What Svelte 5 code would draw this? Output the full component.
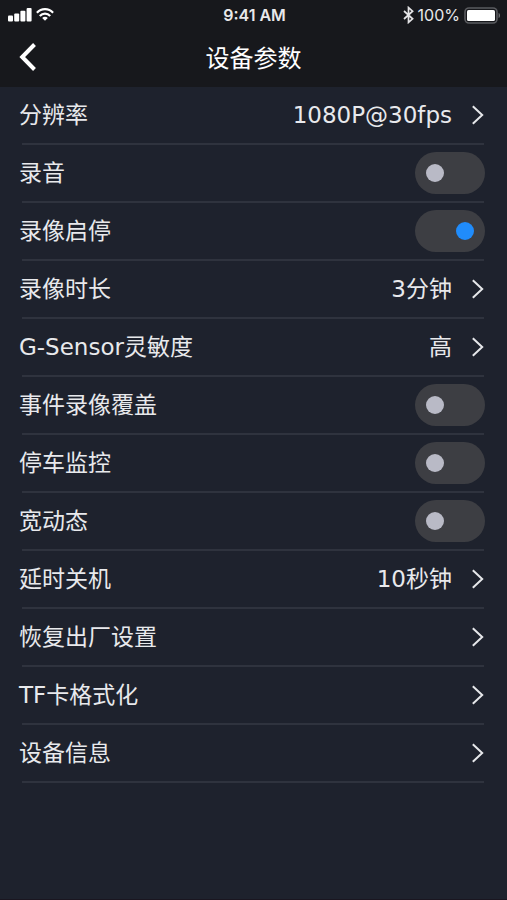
<script>
  let settings = [
    { name: '分辨率', value: '1080P@30fps' },
    { name: '录音', toggle: true, on: false },
    { name: '录像启停', toggle: true, on: true },
    { name: '录像时长', value: '3分钟' },
    { name: 'G-Sensor灵敏度', value: '高' },
    { name: '事件录像覆盖', toggle: true, on: false },
    { name: '停车监控', toggle: true, on: false },
    { name: '宽动态', toggle: true, on: false },
    { name: '延时关机', value: '10秒钟' },
    { name: '恢复出厂设置' },
    { name: 'TF卡格式化' },
    { name: '设备信息' },
  ];
</script>

<div class="screen">
  <header>
    <div class="status">
      <div class="side">
        <svg width="24" height="15" viewBox="0 0 24 15" fill="#fff">
          <rect x="0" y="7.4" width="5" height="6" rx="1" />
          <rect x="6.2" y="5.4" width="5" height="8" rx="1" />
          <rect x="12.4" y="2.8" width="5" height="10.6" rx="1" />
          <rect x="18.6" y="0" width="5" height="13.4" rx="1" />
        </svg>
        <svg width="18" height="14" viewBox="0 0 18 14" fill="none" stroke="#fff" stroke-width="2.2">
          <path d="M0.9 4.8C5.4 0 12.6 0 17.1 4.8" />
          <path d="M3.8 7.9C6.7 4.8 11.3 4.8 14.2 7.9" />
          <path d="M9 12.8L6.2 10C7.8 8.4 10.2 8.4 11.8 10Z" fill="#fff" stroke="none" />
        </svg>
      </div>
      <span class="time">9:41 AM</span>
      <div class="side right">
        <svg width="11" height="18" viewBox="0 0 11 18" fill="none" stroke="#e4e4e6" stroke-width="1.7">
          <path d="M1 5L9.6 12.8L5.5 16.4V1.6L9.6 5.2L1 13" />
        </svg>
        <span class="percent">100%</span>
        <svg width="37" height="17" viewBox="0 0 37 17">
          <rect x="1" y="1" width="32" height="15" rx="4" fill="#17181c" stroke="#5a5b5f" stroke-width="1.6" />
          <rect x="3" y="3" width="28" height="11" rx="1.6" fill="#fff" />
          <path d="M34.6 6V11C36.4 10.4 36.4 6.6 34.6 6Z" fill="#77787b" />
        </svg>
      </div>
    </div>
    <nav>
      <button class="back" aria-label="返回">
        <svg width="18" height="28" viewBox="0 0 18 28" fill="none" stroke="#fff" stroke-width="4">
          <path d="M15.5 1.5L3.2 14L15.5 26.5" />
        </svg>
      </button>
      <h1>设备参数</h1>
    </nav>
  </header>

  <ul>
    {#each settings as item}
      <li>
        {#if item.toggle}
          <label class="row">
            <span class="name">{item.name}</span>
            <input type="checkbox" bind:checked={item.on} />
          </label>
        {:else}
          <button class="row">
            <span class="name">{item.name}</span>
            {#if item.value}
              <span class="value">{item.value}</span>
            {/if}
            <svg width="13" height="20" viewBox="0 0 13 20" fill="none" stroke="#e6e7ea" stroke-width="2">
              <path d="M0.8 1.2L10.2 10L0.8 18.8" />
            </svg>
          </button>
        {/if}
      </li>
    {/each}
  </ul>
</div>

<style>
  :global(body) {
    margin: 0;
    background-color: #1e222d;
  }

  .screen {
    min-height: 100vh;
    box-sizing: border-box;
    border-bottom: 1px solid #1a1620;
    background-color: #1e222d;
    color: #e8e9ec;
    font-family: "DejaVu Sans", "Noto Sans CJK SC", sans-serif;
  }

  header {
    background-color: #17181c;
    color: #fff;
  }

  /* Status bar */
  .status {
    display: grid;
    grid-template-columns: 1fr auto 1fr;
    align-items: center;
    height: 30px;
    padding: 0 6px 0 8px;
    font-family: Inter, sans-serif;
    font-size: 16px;
    color: #e8e8ea;
  }

  .side {
    display: flex;
    align-items: center;
    gap: 4px;
  }

  .right {
    justify-content: flex-end;
  }

  .time {
    font-weight: 600;
  }

  /* Title bar */
  nav {
    display: grid;
    grid-template-columns: 1fr auto 1fr;
    align-items: center;
    height: 57px;
    padding: 0 19px;
  }

  .back {
    display: flex;
    justify-self: start;
    padding: 0 0 4px;
    border: none;
    background: none;
    cursor: pointer;
  }

  h1 {
    margin: 0;
    font-size: 24px;
    font-weight: 400;
    line-height: 32px;
  }

  /* Settings list */
  ul {
    list-style-type: none;
    margin: 0;
    padding: 0;
  }

  li::after {
    content: '';
    display: block;
    height: 2px;
    margin: 0 23px 0 22px;
    background-color: #2f333e;
  }

  .row {
    display: flex;
    align-items: center;
    gap: 20px;
    width: 100%;
    height: 56px;
    box-sizing: border-box;
    padding: 0 22px 0 19px;
    border: none;
    background: none;
    color: inherit;
    font-family: inherit;
    font-size: 23px;
    line-height: 32px;
    text-align: left;
    cursor: pointer;
  }

  .name {
    flex: 1;
  }

  input {
    appearance: none;
    display: flex;
    align-items: center;
    width: 70px;
    height: 42px;
    margin: 0;
    padding: 0 11px;
    box-sizing: border-box;
    border-radius: 21px;
    background-color: #3d3e43;
    cursor: pointer;
  }

  input::before {
    content: '';
    width: 18px;
    height: 18px;
    border-radius: 50%;
    background-color: #b9bac6;
  }

  input:checked {
    justify-content: flex-end;
  }

  input:checked::before {
    background-color: #208cfb;
  }
</style>
